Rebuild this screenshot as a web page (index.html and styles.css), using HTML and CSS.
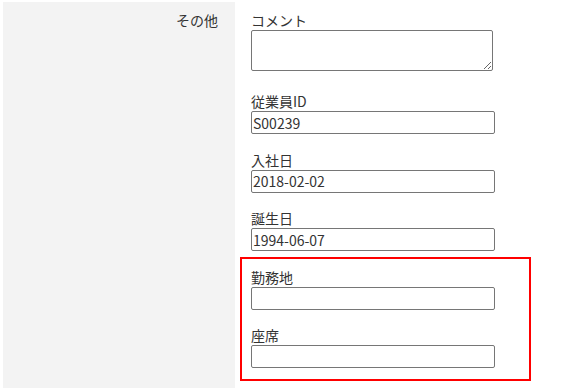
FILE: index.html
```html
<!DOCTYPE html>
<html lang="ja">
<head>
<meta charset="utf-8">
<link rel="stylesheet" href="styles.css">
</head>
<body>
<div class="page">
  <div class="side">その他</div>
  <div class="main">
    <div class="field">
      <label class="label">コメント</label>
      <textarea class="area"></textarea>
    </div>
    <div class="field">
      <label class="label">従業員ID</label>
      <input class="input" type="text" value="S00239">
    </div>
    <div class="field">
      <label class="label">入社日</label>
      <input class="input" type="text" value="2018-02-02">
    </div>
    <div class="field">
      <label class="label">誕生日</label>
      <input class="input" type="text" value="1994-06-07">
    </div>
    <div class="field">
      <label class="label">勤務地</label>
      <input class="input" type="text" value="">
    </div>
    <div class="field">
      <label class="label">座席</label>
      <input class="input" type="text" value="">
    </div>
    <div class="highlight"></div>
  </div>
</div>
</body>
</html>
```
FILE: styles.css
```css
html, body {
  margin: 0;
  padding: 0;
  background: #fff;
}
body {
  font-family: "Noto Sans CJK JP", "Noto Sans", sans-serif;
  font-size: 14px;
  color: #333;
}
.page {
  display: flex;
  padding: 2px 0 0 3px;
  height: 388px;
  box-sizing: border-box;
}
.side {
  width: 232px;
  flex: none;
  box-sizing: border-box;
  background: #f3f3f3;
  text-align: right;
  padding: 8px 17px 0 0;
  line-height: 20px;
}
.main {
  position: relative;
  flex: 1;
  padding: 8px 0 0 16px;
}
.label {
  display: block;
  line-height: 20px;
  height: 20px;
}
.area {
  display: block;
  box-sizing: border-box;
  width: 242px;
  height: 41px;
  margin: 0 0 20px 0;
  border: 1px solid #767676;
  border-radius: 2px;
  font-family: inherit;
  font-size: 14px;
  padding: 2px;
}
.input {
  display: block;
  box-sizing: border-box;
  width: 244px;
  height: 23px;
  margin: 0 0 15.5px 0;
  border: 1px solid #767676;
  border-radius: 2px;
  padding: 0 1px;
  font-family: inherit;
  font-size: 14px;
  color: #333;
  line-height: 21px;
}
.highlight {
  position: absolute;
  left: 5px;
  top: 255px;
  width: 291px;
  height: 124px;
  box-sizing: border-box;
  border: 2px solid #ff0000;
  pointer-events: none;
}
```
